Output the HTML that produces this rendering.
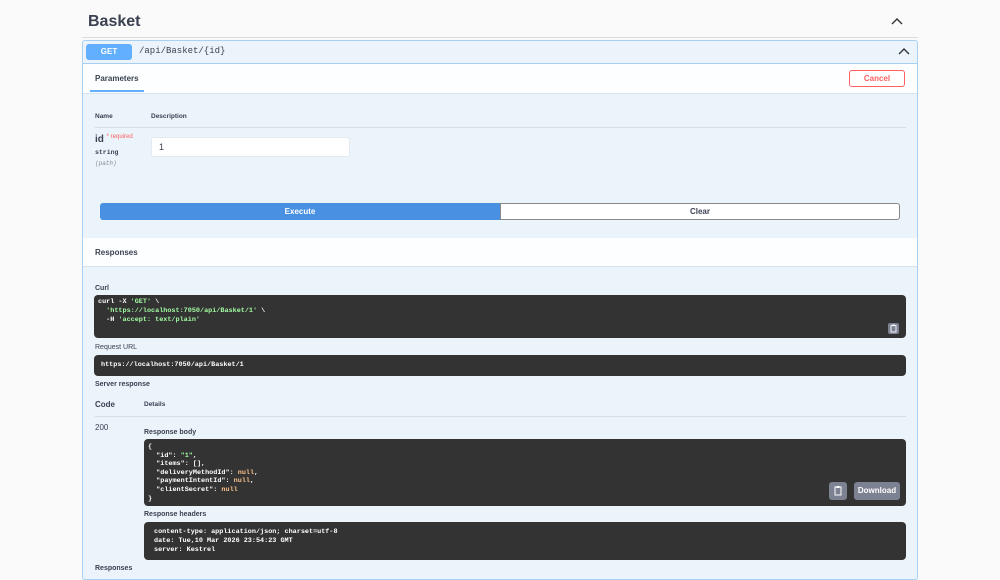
<!DOCTYPE html>
<html><head><meta charset="utf-8"><style>
*{box-sizing:border-box;margin:0;padding:0}
body{width:1000px;height:571px;overflow:hidden;background:#fafafa;font-family:"Liberation Sans",sans-serif;color:#3b4151;position:relative}
.a{position:absolute}
.mono{font-family:"Liberation Mono",monospace;font-weight:bold}
.dark{background:#333;border-radius:4px;color:#fff;font-size:6.8px;line-height:9px}
.lbl{font-size:8px;color:#3b4151}
.str{color:#a2fca2}
.nul{color:#fcc28c}
.cp{background:#7d8293;border-radius:2px}
.cp svg{display:block;margin:auto}
</style></head><body>
<div class="a" style="left:88px;top:13px;font-size:16px;font-weight:bold">Basket</div>
<svg class="a" style="left:890px;top:16px" width="14" height="10"><path d="M2 8 L7 3 L12 8" stroke="#333" stroke-width="1.4" fill="none"/></svg>
<div class="a" style="left:82px;top:37px;width:836px;height:1px;background:#d8dde3"></div>
<div class="a" style="left:82px;top:40px;width:836px;height:540px;background:#ebf3fb;border:1px solid #a8d0f5;border-radius:3px"></div>
<div class="a" style="left:83px;top:63px;width:834px;height:1px;background:#a8d0f5"></div>
<div class="a" style="left:86px;top:44px;width:46px;height:16px;background:#61affe;border-radius:3px;color:#fff;font-size:8px;font-weight:bold;text-align:center;line-height:16px">GET</div>
<div class="a mono" style="left:139px;top:46px;font-size:9px;font-weight:normal;color:#3b4151">/api/Basket/{id}</div>
<svg class="a" style="left:897px;top:46px" width="14" height="10"><path d="M2 8 L7 3 L12 8" stroke="#333" stroke-width="1.4" fill="none"/></svg>
<div class="a" style="left:83px;top:64px;width:834px;height:30px;background:rgba(255,255,255,.85);border-bottom:1px solid #d8e2ec"></div>
<div class="a" style="left:95px;top:74px;font-size:8px;font-weight:bold">Parameters</div>
<div class="a" style="left:90px;top:90px;width:54px;height:2px;background:#61affe"></div>
<div class="a" style="left:849px;top:70px;width:56px;height:17px;border:1px solid #ff6060;border-radius:3px;color:#ff6060;font-size:8px;font-weight:bold;text-align:center;line-height:15px;background:#fff">Cancel</div>
<div class="a" style="left:95px;top:113px;font-size:6.5px;font-weight:bold">Name</div>
<div class="a" style="left:151px;top:113px;font-size:6.5px;font-weight:bold">Description</div>
<div class="a" style="left:95px;top:127px;width:811px;height:1px;background:#d8dde3"></div>
<div class="a" style="left:95px;top:134px;font-size:10px;font-weight:bold">id <span style="color:#ff6060;font-size:6px;font-weight:normal;vertical-align:top">* required</span></div>
<div class="a mono" style="left:95px;top:149px;font-size:6.5px">string</div>
<div class="a mono" style="left:95px;top:160px;font-size:6px;font-weight:normal;font-style:italic;color:#888">(path)</div>
<div class="a" style="left:151px;top:137px;width:199px;height:20px;background:#fff;border-radius:3px;border:1px solid #e4eaf0;font-size:9px;line-height:18px;padding-left:7px">1</div>
<div class="a" style="left:100px;top:203px;width:400px;height:17px;background:#4990e2;border-radius:3px 0 0 3px;color:#fff;font-size:8px;font-weight:bold;text-align:center;line-height:17px">Execute</div>
<div class="a" style="left:500px;top:203px;width:400px;height:17px;border:1px solid #888;border-radius:0 3px 3px 0;background:#fff;font-size:8px;font-weight:bold;text-align:center;line-height:15px">Clear</div>
<div class="a" style="left:83px;top:238px;width:834px;height:29px;background:rgba(255,255,255,.9);border-bottom:1px solid #d8e2ec"></div>
<div class="a" style="left:95px;top:248px;font-size:8px;font-weight:bold">Responses</div>
<div class="a lbl" style="left:95px;top:285px;font-weight:bold;font-size:7px">Curl</div>
<div class="a dark mono" style="left:94px;top:295px;width:812px;height:43px;padding:3px 4px">curl -X <span class="str">'GET'</span> \<br>&nbsp;&nbsp;<span class="str">'https://localhost:7050/api/Basket/1'</span> \<br>&nbsp;&nbsp;-H <span class="str">'accept: text/plain'</span></div>
<div class="a cp" style="left:888px;top:323px;width:11px;height:11px"><svg width="11" height="11"><rect x="3" y="2.5" width="5" height="6.5" fill="none" stroke="#fff" stroke-width="0.9"/><rect x="4.3" y="1.5" width="2.4" height="1.6" fill="#fff"/></svg></div>
<div class="a lbl" style="left:95px;top:344px;font-size:7px">Request URL</div>
<div class="a dark mono" style="left:94px;top:355px;width:812px;height:21px;padding:5.5px 7px">https://localhost:7050/api/Basket/1</div>
<div class="a lbl" style="left:95px;top:381px;font-size:7px;font-weight:bold">Server response</div>
<div class="a" style="left:95px;top:400px;font-size:8px;font-weight:bold">Code</div>
<div class="a" style="left:144px;top:401px;font-size:6.5px;font-weight:bold">Details</div>
<div class="a" style="left:95px;top:416px;width:811px;height:1px;background:#d8dde3"></div>
<div class="a" style="left:95px;top:423px;font-size:8px">200</div>
<div class="a lbl" style="left:144px;top:429px;font-size:7px;font-weight:bold">Response body</div>
<div class="a dark mono" style="left:144px;top:439px;width:762px;height:67px;padding:4px 4px;line-height:8.6px">{<br>&nbsp;&nbsp;"id": <span class="str">"1"</span>,<br>&nbsp;&nbsp;"items": [],<br>&nbsp;&nbsp;"deliveryMethodId": <span class="nul">null</span>,<br>&nbsp;&nbsp;"paymentIntentId": <span class="nul">null</span>,<br>&nbsp;&nbsp;"clientSecret": <span class="nul">null</span><br>}</div>
<div class="a cp" style="left:829px;top:482px;width:18px;height:18px;border-radius:3px"><svg width="18" height="18"><rect x="6" y="5" width="6" height="8" fill="none" stroke="#fff" stroke-width="1"/><rect x="7.5" y="4" width="3" height="2" fill="#fff"/></svg></div>
<div class="a" style="left:854px;top:482px;width:46px;height:18px;background:#7d8293;border-radius:3px;color:#fff;font-size:8px;font-weight:bold;text-align:center;line-height:18px">Download</div>
<div class="a lbl" style="left:144px;top:511px;font-size:7px;font-weight:bold">Response headers</div>
<div class="a dark mono" style="left:144px;top:522px;width:762px;height:38px;padding:6px 10px">content-type: application/json; charset=utf-8<br>date: Tue,10 Mar 2026 23:54:23 GMT<br>server: Kestrel</div>
<div class="a lbl" style="left:95px;top:565px;font-size:7px;font-weight:bold">Responses</div>
</body></html>
